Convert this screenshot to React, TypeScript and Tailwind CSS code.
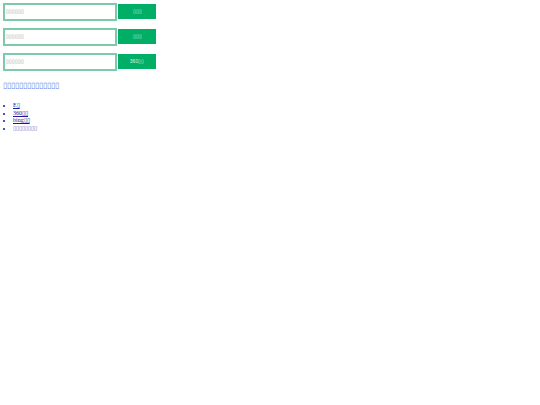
import React from 'react';

// Missing-glyph boxes, as in the screenshot
const box = (n: number) => '\u25AF'.repeat(n);

const searches = [
    { label: box(3) },
    { label: box(3) },
    { label: '360' + box(2) },
];

const App = () => {
    return (
        <div className="min-h-[405px] bg-white pl-[3px] pt-[3px] font-['Liberation_Serif',serif]">
            {/* Search rows */}
            <div className="flex flex-col gap-[7px]">
                {searches.map((s, i) => (
                    <div key={i} className="flex h-[18px] items-start gap-[1px]">
                        <div className="flex h-[18px] w-[114px] items-center border-2 border-[#7fc9ab] bg-white pl-[1px] text-[4.5px] text-[#8a8a8a]">
                            {box(6)}
                        </div>
                        <div className="mt-[1px] flex h-[15px] w-[38px] items-center justify-center bg-[#00ae66] font-['Liberation_Sans',sans-serif] text-[5px] text-[#d8f3e6]">
                            {s.label}
                        </div>
                    </div>
                ))}
            </div>

            {/* Heading */}
            <h2 className="mt-[7px] h-[16px] text-[8px] font-normal leading-[16px] text-[#6f86e0]">{box(14)}</h2>

            {/* Links */}
            <ul className="mt-[8px] list-disc pl-[10px] text-[6px] leading-[7.5px] text-[#1a1a9c]">
                <li><a className="underline">{'E' + box(1)}</a></li>
                <li><a className="underline">{'360' + box(2)}</a></li>
                <li><a className="underline">{'bing' + box(2)}</a></li>
                <li><a className="text-[#6f6fc8]">{box(8)}</a></li>
            </ul>
        </div>
    );
};

export default App;
